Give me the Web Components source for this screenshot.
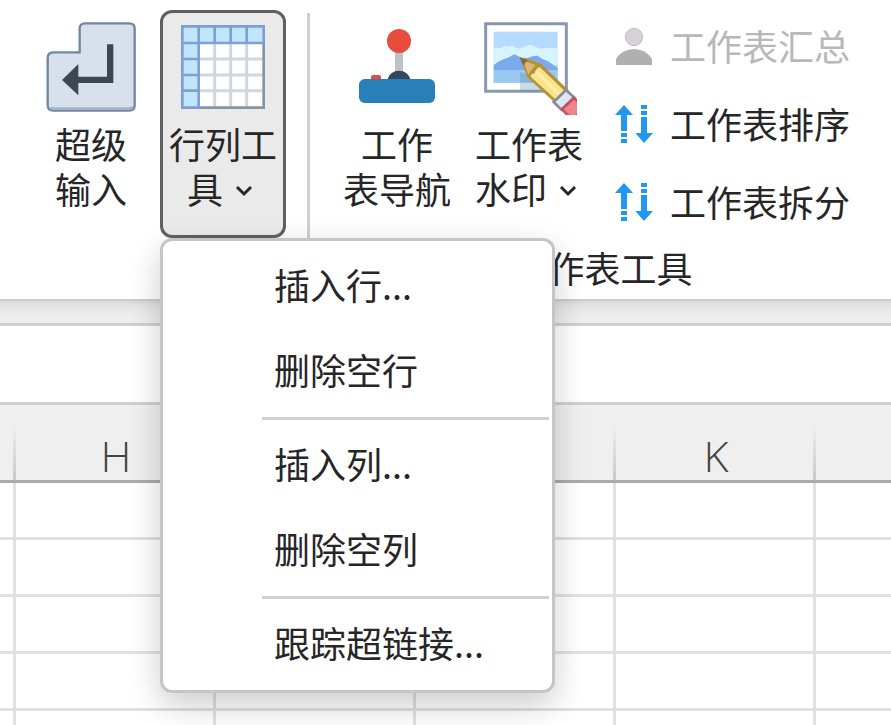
<!DOCTYPE html>
<html lang="zh-CN">
<head>
<meta charset="utf-8">
<meta name="viewport" content="width=device-width, initial-scale=1">
<title>工作表工具</title>
<style>
    html, body {
        height: 100%;
        margin: 0;
    }

    body {
        display: flex;
        flex-direction: column;
        overflow: hidden;
        background: #ffffff;
        color: #262626;
        font-family: "Noto Sans CJK SC", sans-serif;
        font-size: 36px;
        font-weight: 400;
        line-height: 45px;
    }
</style>
</head>
<body>

<ribbon-bar>
    <ribbon-group>
        <ribbon-button>
            <app-icon slot="icon" name="enter"></app-icon>
            超级<br>输入
        </ribbon-button>
        <ribbon-button open dropdown>
            <app-icon slot="icon" name="grid"></app-icon>
            行列工具
            <drop-menu slot="menu">
                <menu-entry>插入行...</menu-entry>
                <menu-entry>删除空行</menu-entry>
                <menu-divider></menu-divider>
                <menu-entry>插入列...</menu-entry>
                <menu-entry>删除空列</menu-entry>
                <menu-divider></menu-divider>
                <menu-entry>跟踪超链接...</menu-entry>
            </drop-menu>
        </ribbon-button>
    </ribbon-group>
    <ribbon-group label="工作表工具">
        <ribbon-button>
            <app-icon slot="icon" name="joystick"></app-icon>
            工作<br>表导航
        </ribbon-button>
        <ribbon-button dropdown>
            <app-icon slot="icon" name="picture"></app-icon>
            工作表水印
        </ribbon-button>
        <ribbon-stack>
            <ribbon-command icon="person" disabled>工作表汇总</ribbon-command>
            <ribbon-command icon="arrows">工作表排序</ribbon-command>
            <ribbon-command icon="arrows">工作表拆分</ribbon-command>
        </ribbon-stack>
    </ribbon-group>
</ribbon-bar>
<formula-bar></formula-bar>
<sheet-grid columns=",H,,,K," rows="8"></sheet-grid>

<script>
/**
 * Icon drawings, 3 units to the pixel
 */
const ICONS = {
    enter: `
        <svg viewBox="0 0 270 270" width="90" height="90">
            <path d="M22 91H101V20Q101 4 117 4H250Q266 4 266 20V250Q266 266 250 266H22Q5 266 5 250V108Q5 91 22 91Z"
                fill="#d8e1eb" stroke="#7187a2" stroke-width="7"/>
            <path d="M14 256Q16 259 24 259H248Q256 259 259 254" fill="none" stroke="#a3b4c8" stroke-width="7"/>
            <path d="M183 67H202V183H97V220L48 174L97 126V164H183Z" fill="#3b4754"/>
        </svg>`,
    grid: `
        <svg viewBox="0 0 270 270" width="90" height="90">
            <path d="M9 9H261V261H9Z" fill="#ffffff"/>
            <path d="M9 9H261V66H66V261H9Z" fill="#bfe5ff"/>
            <path d="M110 66V258M158 66V258M206 66V258M66 111H258M66 159H258M66 206H258"
                stroke="#ccd9e1" stroke-width="9" fill="none"/>
            <path d="M257 66V257H63" stroke="#8296a8" stroke-width="8" fill="none"/>
            <path d="M257 66V13H13V257H66M62 13V261M13 63H261M110 13V63M158 13V63M206 13V63M13 111H62M13 159H62M13 206H62"
                stroke="#7ea0d0" stroke-width="8" fill="none"/>
        </svg>`,
    joystick: `
        <svg viewBox="0 0 270 270" width="90" height="90">
            <path d="M129 80H153V155H129Z" fill="#bdc3c7"/>
            <path d="M106 175C110 156 124 146 141 146S172 156 176 175Z" fill="#34495e"/>
            <rect x="57" y="159" width="30" height="20" rx="6" fill="#e74c3c"/>
            <rect x="21" y="171" width="228" height="72" rx="17" fill="#2980b9"/>
            <circle cx="141" cy="57" r="36" fill="#e74c3c"/>
        </svg>`,
    picture: `
        <svg viewBox="0 0 270 270" width="90" height="90" overflow="visible">
            <clipPath id="edge"><path d="M0 0H279V279H0Z"/></clipPath>
            <g clip-path="url(#edge)">
                <path d="M5 5H247V208H5Z" fill="#ffffff" stroke="#8699ad" stroke-width="9"/>
                <path d="M29 29H221V182H29Z" fill="#b5dcff"/>
                <path d="M29 80Q40 76 50 79Q62 68 76 75Q84 67 94 77Q108 81 118 76Q130 66 144 70L168 80Q190 75 200 79H221V130H29Z" fill="#d7f4fe"/>
                <path d="M29 130Q50 112 70 108L91 97Q100 100 112 108H132Q148 100 162 102Q176 114 192 118L221 138V146H29Z" fill="#7aa9ec"/>
                <path d="M29 144H221V182H29Z" fill="#99c8f2"/>
                <path d="M108 150L140 162L188 208H108Z" fill="#7192ae" opacity=".35"/>
                <path d="M107 106Q112 104 169 124L256 207L217 246L130 166Z" fill="#b79232"/>
                <path d="M120 118L155 129Q139 147 132 158Z" fill="#dcb77b"/>
                <path d="M107 106L131 115L117 130Z" fill="#80694a"/>
                <path d="M167 135L242 207L216 233L140 164Q142 154 152 154Q153 140 167 135Z" fill="#fbe28f"/>
                <path d="M157 150L228 219" stroke="#fff0a8" stroke-width="9"/>
                <path d="M246 204L270 226L232 263L209 240Z" fill="#dce7f1" stroke="#7f8d9e" stroke-width="8"/>
                <path d="M270 228L300 256L266 294L234 262Z" fill="#ee858a" stroke="#c94f5a" stroke-width="8"/>
            </g>
        </svg>`,
    person: `
        <svg viewBox="0 0 114 114" width="38" height="38">
            <circle cx="57" cy="30" r="26" fill="#d6d2d7" stroke="#aaa7ab" stroke-width="2"/>
            <path d="M3 114V96Q22 66 57 66T111 96V114Z" fill="#b1afb2"/>
        </svg>`,
    arrows: `
        <svg viewBox="0 0 114 114" width="38" height="38" fill="#2196f3">
            <path d="M27 0L54 30H36V78H18V30H0ZM18 84H36V96H18ZM18 102H36V114H18Z"/>
            <path d="M78 0H96V12H78ZM78 18H96V30H78ZM78 36H96V84H114L87 114L61 84H78Z"/>
        </svg>`
};

class AppIcon extends HTMLElement {
    connectedCallback() {
        const root = this.attachShadow({ mode: 'open' });
        root.innerHTML = `
            <style>
                :host { display: block; }
                svg { display: block; }
            </style>
            ${ICONS[this.getAttribute('name')]}
        `;
        root.querySelector('svg').setAttribute('aria-hidden', 'true');
    }
}

class RibbonBar extends HTMLElement {
    connectedCallback() {
        this.attachShadow({ mode: 'open' }).innerHTML = `
            <style>
                :host {
                    display: flex;
                    position: relative;
                    z-index: 2;
                    flex: none;
                    padding: 8px 0 9px 28px;
                    background: #ffffff;
                    border-bottom: 2px solid #cccccc;
                }
            </style>
            <slot></slot>
        `;
    }
}

class RibbonGroup extends HTMLElement {
    connectedCallback() {
        const label = this.getAttribute('label');
        this.attachShadow({ mode: 'open' }).innerHTML = `
            <style>
                :host {
                    display: flex;
                    flex-direction: column;
                    gap: 3px;
                }
                :host([label]) {
                    flex: 1;
                    margin-left: 21px;
                    border-left: 3px solid #d0d0d0;
                    margin-top: 5px;
                }
                .items {
                    display: flex;
                    align-items: flex-start;
                    gap: 6px;
                    padding-top: 2px;
                }
                :host([label]) .items {
                    margin-top: -5px;
                    padding-left: 24px;
                }
                .label {
                    padding-left: 4px;
                    text-align: center;
                }
            </style>
            <div class="items"><slot></slot></div>
            ${label ? `<div class="label">${label}</div>` : ''}
        `;
    }
}

class RibbonButton extends HTMLElement {
    connectedCallback() {
        const dropdown = this.hasAttribute('dropdown');
        this.attachShadow({ mode: 'open' }).innerHTML = `
            <style>
                :host {
                    display: block;
                    position: relative;
                    width: 126px;
                }
                button {
                    display: flex;
                    flex-direction: column;
                    align-items: center;
                    box-sizing: border-box;
                    width: 100%;
                    min-height: 228px;
                    padding: 9px 0;
                    border: 3px solid transparent;
                    border-radius: 12px;
                    background: none;
                    color: inherit;
                    font: inherit;
                }
                :host([open]) button {
                    border-color: #606060;
                    background: #eaeaea;
                }
                .text {
                    padding: 9px 4px 0;
                    text-align: center;
                }
                .chevron {
                    width: 18px;
                    height: 12px;
                    margin: 0 6px 7px 4px;
                }
            </style>
            <button type="button" ${dropdown ? `aria-haspopup="menu" aria-expanded="${this.hasAttribute('open')}"` : ''}>
                <slot name="icon"></slot>
                <span class="text"><slot></slot>${dropdown ? `<svg class="chevron" viewBox="0 0 18 12" aria-hidden="true"><path d="M2 2L9 9L16 2" fill="none" stroke="#262626" stroke-width="3"/></svg>` : ''}</span>
            </button>
            <slot name="menu"></slot>
        `;
    }
}

class RibbonStack extends HTMLElement {
    connectedCallback() {
        this.attachShadow({ mode: 'open' }).innerHTML = `
            <style>
                :host {
                    display: flex;
                    flex-direction: column;
                    margin-top: -2px;
                }
            </style>
            <slot></slot>
        `;
    }
}

class RibbonCommand extends HTMLElement {
    connectedCallback() {
        const disabled = this.hasAttribute('disabled') ? 'disabled' : '';
        this.attachShadow({ mode: 'open' }).innerHTML = `
            <style>
                :host { display: block; }
                button {
                    display: flex;
                    align-items: center;
                    gap: 17px;
                    height: 78px;
                    padding: 0 17px 2px;
                    border: 0;
                    background: none;
                    color: inherit;
                    font: inherit;
                    white-space: nowrap;
                }
                button:disabled { color: #b8b8b8; }
                span { padding-bottom: 2px; }
            </style>
            <button type="button" ${disabled}>
                <app-icon name="${this.getAttribute('icon')}"></app-icon>
                <span><slot></slot></span>
            </button>
        `;
    }
}

class DropMenu extends HTMLElement {
    connectedCallback() {
        this.setAttribute('role', 'menu');
        this.attachShadow({ mode: 'open' }).innerHTML = `
            <style>
                :host {
                    display: block;
                    position: absolute;
                    top: 100%;
                    left: 0;
                    z-index: 10;
                    box-sizing: border-box;
                    min-width: 395px;
                    padding: 4px 0 2px;
                    border: 3px solid #c6c5c4;
                    border-radius: 12px;
                    background: #ffffff;
                    box-shadow: 0 12px 32px rgba(0, 0, 0, 0.2);
                }
            </style>
            <slot></slot>
        `;
    }
}

class MenuEntry extends HTMLElement {
    connectedCallback() {
        this.attachShadow({ mode: 'open' }).innerHTML = `
            <style>
                :host { display: block; }
                button {
                    display: block;
                    width: 100%;
                    padding: 17px 24px 23px 111px;
                    border: 0;
                    background: none;
                    color: inherit;
                    font: inherit;
                    text-align: left;
                    white-space: nowrap;
                }
            </style>
            <button type="button" role="menuitem"><slot></slot></button>
        `;
    }
}

class MenuDivider extends HTMLElement {
    connectedCallback() {
        this.setAttribute('role', 'separator');
        this.attachShadow({ mode: 'open' }).innerHTML = `
            <style>
                :host {
                    display: block;
                    height: 3px;
                    margin: 2px 3px 4px 99px;
                    background: #d0d0d0;
                }
            </style>
        `;
    }
}

class FormulaBar extends HTMLElement {
    connectedCallback() {
        this.attachShadow({ mode: 'open' }).innerHTML = `
            <style>
                :host {
                    display: block;
                    flex: none;
                    padding-top: 22px;
                    background: linear-gradient(#d8d8d8, #e6e6e6 6px, #eeeeee 16px, #eeeeee 22px);
                }
                input {
                    display: block;
                    box-sizing: border-box;
                    width: 100%;
                    height: 82px;
                    padding: 0 16px;
                    border: solid #d0d0d0;
                    border-width: 3px 0;
                    border-radius: 0;
                    background: #ffffff;
                    font: inherit;
                    outline: 0;
                }
            </style>
            <input type="text" aria-label="编辑栏">
        `;
    }
}

class SheetGrid extends HTMLElement {
    connectedCallback() {
        const columns = this.getAttribute('columns').split(',');
        const rows = Number(this.getAttribute('rows'));
        const head = columns.map(name => `<th scope="col">${name}</th>`).join('');
        const row = `<tr>${'<td></td>'.repeat(columns.length)}</tr>`;

        this.attachShadow({ mode: 'open' }).innerHTML = `
            <style>
                :host {
                    display: block;
                    flex: 1;
                    min-height: 0;
                    overflow: hidden;
                }
                table {
                    width: 1016px;
                    min-width: 100%;
                    table-layout: fixed;
                    border-collapse: separate;
                    border-spacing: 0;
                }
                th, td {
                    box-sizing: border-box;
                    width: 200px;
                    padding: 0;
                }
                th:first-child { width: 16px; }
                th {
                    height: 78px;
                    padding-top: 27px;
                    border-bottom: 3px solid #aaaaaa;
                    background: linear-gradient(transparent 20px, #c8c8c8) right / 3px 100% no-repeat #efefef;
                    color: #444444;
                    font: 300 43px/48px "Open Sans", sans-serif;
                }
                td {
                    height: 57px;
                    border: solid #e0e0e0;
                    border-width: 0 3px 3px 0;
                }
            </style>
            <table>
                <thead><tr>${head}</tr></thead>
                <tbody>${row.repeat(rows)}</tbody>
            </table>
        `;
    }
}

// Register the custom elements
customElements.define('app-icon', AppIcon);
customElements.define('ribbon-bar', RibbonBar);
customElements.define('ribbon-group', RibbonGroup);
customElements.define('ribbon-button', RibbonButton);
customElements.define('ribbon-stack', RibbonStack);
customElements.define('ribbon-command', RibbonCommand);
customElements.define('drop-menu', DropMenu);
customElements.define('menu-entry', MenuEntry);
customElements.define('menu-divider', MenuDivider);
customElements.define('formula-bar', FormulaBar);
customElements.define('sheet-grid', SheetGrid);
</script>
</body>
</html>
